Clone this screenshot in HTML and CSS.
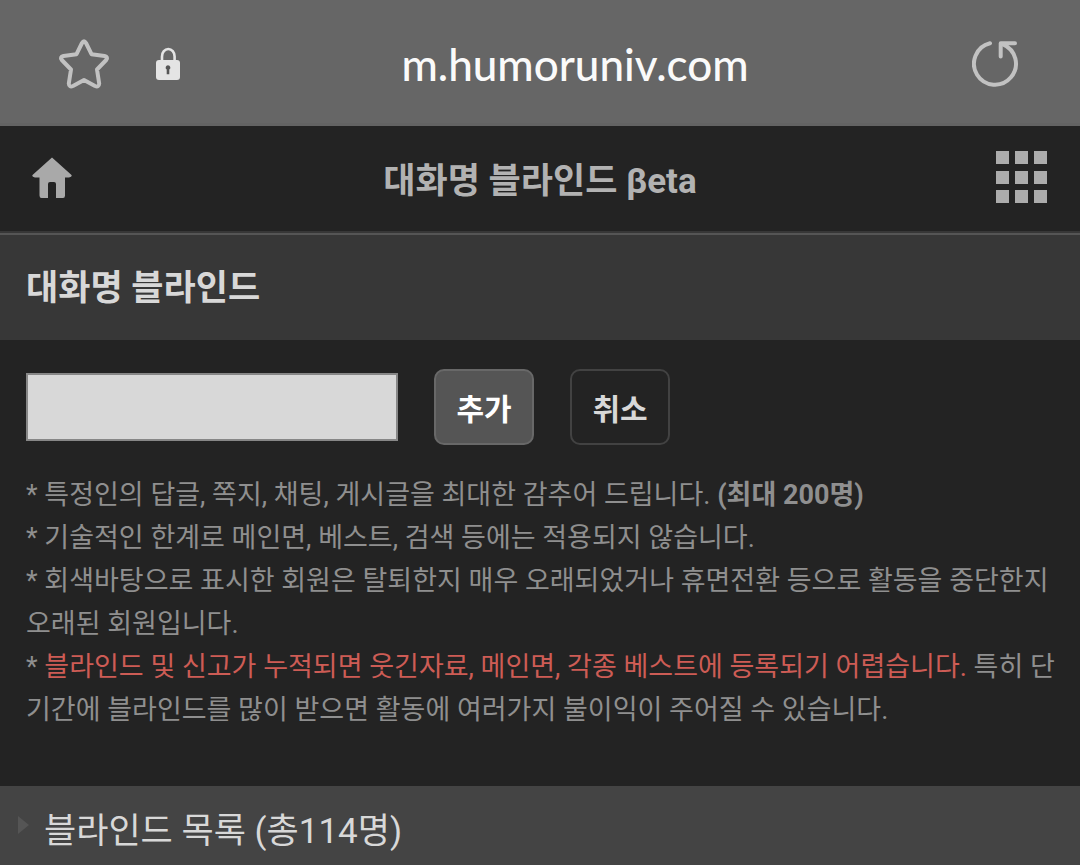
FILE: index.html
```
<!DOCTYPE html>
<html lang="ko">
<head>
  <meta charset="UTF-8">
  <meta name="viewport" content="width=device-width, initial-scale=1">
  <title>대화명 블라인드</title>
  <link rel="stylesheet" href="styles.css">
</head>
<body>
  <div class="address-bar">
    <div class="address-left">
      <button type="button" class="icon-btn" aria-label="Bookmark">
        <svg width="52" height="52" viewBox="0 0 52 52" fill="none" stroke="#c2c2c2" stroke-width="4" stroke-linejoin="round">
          <path d="M24 5Q26 1.500 28 5L33.500 16.200L46.500 18Q50.500 19 48.200 22L39 31.500L41.200 45.500Q41 49.500 37 48L26 42L15 48Q11 49.500 10.800 45.500L13 31.500L3.800 22Q1.500 19 5.500 18L18.500 16.200Z"/>
        </svg>
      </button>
      <svg class="lock" width="26" height="34" viewBox="0 0 26 34">
        <path d="M7 15V9.500a6.300 7.500 0 0 1 12.600 0V15" fill="none" stroke="#e4e4e4" stroke-width="2.600"/>
        <rect x="1" y="13" width="24" height="20" rx="3" fill="#e4e4e4"/>
        <path d="M13 18.200a2.400 2.400 0 0 1 1.300 4.400V27.300h-2.600V22.600A2.400 2.400 0 0 1 13 18.200z" fill="#555"/>
      </svg>
    </div>
    <span class="address">m.humoruniv.com</span>
    <button type="button" class="icon-btn reload" aria-label="Reload">
      <svg width="48" height="48" viewBox="0 0 48 48" fill="none" stroke="#c2c2c2" stroke-width="4" stroke-linecap="round" stroke-linejoin="round">
        <path d="M18 3.300A21 21 0 1 0 31 4.300"/>
        <path d="M28.700 16.500V3.300H43"/>
      </svg>
    </button>
  </div>

  <header class="site-header">
    <a href="#" class="home" aria-label="홈">
      <svg width="40" height="42" viewBox="0 0 40 42" fill="#a9a9a9">
        <path d="M20 0.500L39.500 18Q40.500 20 37 20.500H33V38.500Q33 41 31 41H24V27Q24 25 22 25H18Q16 25 16 27V41H9.500Q7.500 41 7.500 38.500V20.500H3Q-0.500 20 0.500 18Z"/>
      </svg>
    </a>
    <h1>대화명 블라인드 βeta</h1>
    <button type="button" class="icon-btn menu" aria-label="메뉴">
      <svg width="52" height="53" viewBox="0 0 52 53" fill="#acacac">
        <path d="M0 0h13v13H0zM19 0h13v13H19zM38 0h13v13H38zM0 20h13v13H0zM19 20h13v13H19zM38 20h13v13H38zM0 39h13v13H0zM19 39h13v13H19zM38 39h13v13H38z"/>
      </svg>
    </button>
  </header>

  <main>
    <h2 class="section-title">대화명 블라인드</h2>

    <form class="blind-form">
      <input type="text" class="nickname" aria-label="대화명">
      <button type="button" class="btn btn-add">추가</button>
      <button type="button" class="btn">취소</button>
    </form>

    <div class="notice">
      <p>* 특정인의 답글, 쪽지, 채팅, 게시글을 최대한 감추어 드립니다. <b>(최대 200명)</b></p>
      <p>* 기술적인 한계로 메인면, 베스트, 검색 등에는 적용되지 않습니다.</p>
      <p>* 회색바탕으로 표시한 회원은 탈퇴한지 매우 오래되었거나 휴면전환 등으로 활동을 중단한지 오래된 회원입니다.</p>
      <p>* <span class="warning">블라인드 및 신고가 누적되면 웃긴자료, 메인면, 각종 베스트에 등록되기 어렵습니다.</span> 특히 단기간에 블라인드를 많이 받으면 활동에 여러가지 불이익이 주어질 수 있습니다.</p>
    </div>

    <h3 class="list-title">블라인드 목록 (총114명)</h3>
  </main>
</body>
</html>
```

FILE: styles.css
```
* {
  box-sizing: border-box;
}

body {
  margin: 0;
  min-height: 100vh;
  background: #232323;
  color: #8f8f8f;
  font-family: Roboto, "Noto Sans CJK KR", sans-serif;
}

h1, h2, h3, p {
  margin: 0;
}

.icon-btn {
  padding: 0;
  border: 0;
  background: none;
  cursor: pointer;
}

.icon-btn svg,
.home svg {
  display: block;
}

/* browser address bar */
.address-bar {
  display: grid;
  grid-template-columns: 1fr auto 1fr;
  align-items: center;
  height: 126px;
  padding: 4px 60px 0 58px;
  background: #666;
  border-bottom: 3px solid #636363;
}

.address-left {
  display: flex;
  align-items: center;
  gap: 45px;
}

.address {
  padding-left: 72px;
  color: #fafafa;
  font-family: Lato, "Noto Sans CJK KR", sans-serif;
  font-size: 44px;
  font-weight: 500;
}

.reload {
  justify-self: end;
}

/* site header */
.site-header {
  display: grid;
  grid-template-columns: 1fr auto 1fr;
  align-items: center;
  height: 109px;
  padding: 0 32px 4px;
  border-bottom: 2px solid #555;
  box-shadow: inset 0 -2px #373737;
}

.site-header h1 {
  color: #b2b2b2;
  font-size: 35px;
  font-weight: 700;
}

.menu {
  justify-self: end;
}

.section-title {
  padding: 27px 26px 25px;
  background: #373737;
  color: #d8d8d8;
  font-size: 35px;
  font-weight: 700;
  line-height: 53px;
}

.blind-form {
  display: flex;
  align-items: center;
  gap: 36px;
  padding: 29px 26px;
}

.nickname {
  width: 372px;
  height: 68px;
  padding: 0 12px;
  border: 2px solid #878787;
  border-radius: 0;
  background: #d8d8d8;
  color: #232323;
  font: inherit;
  font-size: 30px;
}

.btn {
  width: 100px;
  height: 76px;
  padding: 0;
  border: 2px solid #424242;
  border-radius: 10px;
  background: #232323;
  color: #d8d8d8;
  font: inherit;
  font-size: 30px;
  font-weight: 700;
  cursor: pointer;
}

.btn-add {
  border-color: #686868;
  background: #555;
  color: #fff;
}

.notice {
  padding: 0 16px 54px 26px;
  font-size: 27px;
  line-height: 43px;
  word-break: break-all;
}

.warning {
  color: #cd5c55;
}

.list-title {
  display: flex;
  padding: 18px 18px 14px;
  background: #444;
  color: #d8d8d8;
  font-size: 35px;
  font-weight: 400;
  line-height: 56px;
}

.list-title::before {
  content: "";
  margin: 12px 15px 0 0;
  height: 0;
  border: 9px solid transparent;
  border-left: 11px solid #555;
  border-right: 0;
}
```
